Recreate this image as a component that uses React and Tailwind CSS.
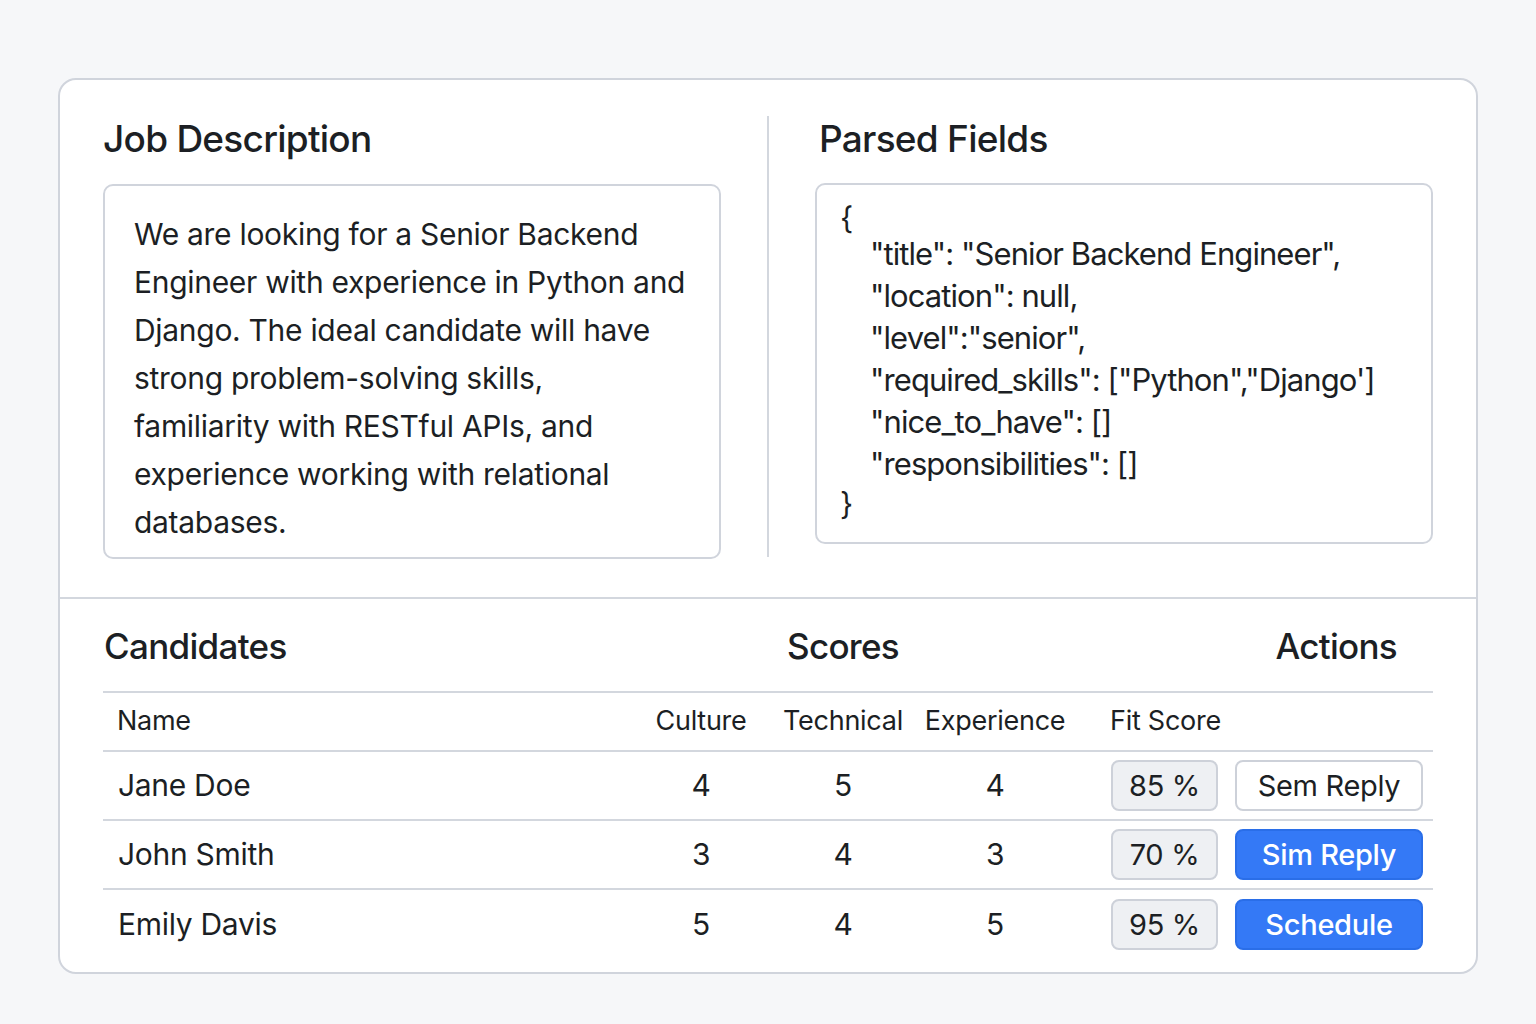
const candidates = [
  { name: 'Jane Doe', culture: 4, technical: 5, experience: 4, fit: '85 %', action: 'Sem Reply', primary: false },
  { name: 'John Smith', culture: 3, technical: 4, experience: 3, fit: '70 %', action: 'Sim Reply', primary: true },
  { name: 'Emily Davis', culture: 5, technical: 4, experience: 5, fit: '95 %', action: 'Schedule', primary: true },
]

const jobLines = [
  'We are looking for a Senior Backend',
  'Engineer with experience in Python and',
  'Django. The ideal candidate will have',
  'strong problem-solving skills,',
  'familiarity with RESTful APIs, and',
  'experience working with relational',
  'databases.',
]

const cols = 'grid grid-cols-[535px_126px_158px_146px_158px_1fr]'

export default function App() {
  return (
    <div className="min-h-screen bg-[#f6f7f9] pt-[78px] pl-[58px] font-['Inter',sans-serif] text-[#1c1f24]">
      <div className="w-[1420px] h-[896px] bg-white border-2 border-[#d0d4dc] rounded-[18px] overflow-hidden flex flex-col">
        {/* Top section */}
        <div className="flex px-[43px] pt-[34px] pb-[38px] border-b-2 border-[#d3d7de]">
          <div className="w-[620px]">
            <h2 className="text-[37px] leading-[50px] font-medium tracking-[-0.02em]">Job Description</h2>
            <div className="mt-[20px] h-[375px] border-2 border-[#d0d4dc] rounded-[10px] pl-[29px] pt-[24px] text-[30px] leading-[48px] tracking-[-0.01em] whitespace-nowrap">
              {jobLines.map((l) => (
                <div key={l}>{l}</div>
              ))}
            </div>
          </div>
          <div className="mx-[46px] w-[2px] bg-[#d3d7de] mt-[2px] mb-[2px]" />
          <div className="w-[620px]">
            <h2 className="text-[37px] leading-[50px] font-medium tracking-[-0.02em] pl-[4px]">Parsed Fields</h2>
            <div className="mt-[19px] h-[361px] border-2 border-[#d0d4dc] rounded-[10px] pl-[23px] pt-[18px] text-[31px] leading-[42px] tracking-[-0.03em] whitespace-nowrap">
              <div className="leading-[30px]">{'{'}</div>
              <div className="pl-[30px]">
                <div>"title": "Senior Backend Engineer",</div>
                <div>"location": null,</div>
                <div>"level":"senior",</div>
                <div>"required_skills": ["Python","Django']</div>
                <div>"nice_to_have": []</div>
                <div>"responsibilities": []</div>
              </div>
              <div className="leading-[38px]">{'}'}</div>
            </div>
          </div>
        </div>

        {/* Candidates */}
        <div className="px-[43px] pt-[22px]">
          <div className={`${cols} items-start h-[72px] border-b-2 border-[#d3d7de] text-[35px] leading-[50px] font-medium tracking-[-0.02em]`}>
            <div className="pl-[1px]">Candidates</div>
            <div />
            <div className="text-center whitespace-nowrap">Scores</div>
            <div />
            <div />
            <div className="text-right pr-[36px]">Actions</div>
          </div>
          <div className={`${cols} items-center h-[59px] border-b-2 border-[#d3d7de] text-[27px] tracking-[-0.01em]`}>
            <div className="pl-[14px]">Name</div>
            <div className="text-center">Culture</div>
            <div className="text-center">Technical</div>
            <div className="text-center">Experience</div>
            <div className="pl-[42px] whitespace-nowrap">Fit Score</div>
            <div />
          </div>
          {candidates.map((c, i) => (
            <div
              key={c.name}
              className={`${cols} items-center h-[69px] text-[30px] tracking-[-0.01em] ${i < candidates.length - 1 ? 'border-b-2 border-[#d3d7de]' : ''}`}
            >
              <div className="pl-[15px]">{c.name}</div>
              <div className="text-center">{c.culture}</div>
              <div className="text-center">{c.technical}</div>
              <div className="text-center">{c.experience}</div>
              <div className="pl-[43px]">
                <div className="w-[107px] h-[51px] flex items-center justify-center bg-[#eef0f3] border-2 border-[#cdd1d9] rounded-[8px] text-[29px]">
                  {c.fit}
                </div>
              </div>
              <div className="pl-[9px]">
                <button
                  className={`w-[188px] h-[51px] flex items-center justify-center rounded-[8px] border-2 text-[29px] ${
                    c.primary
                      ? 'bg-[#3479f6] border-[#2a6ee8] text-white font-medium'
                      : 'bg-white border-[#cdd1d9] text-[#1c1f24]'
                  }`}
                >
                  {c.action}
                </button>
              </div>
            </div>
          ))}
        </div>
      </div>
    </div>
  )
}
